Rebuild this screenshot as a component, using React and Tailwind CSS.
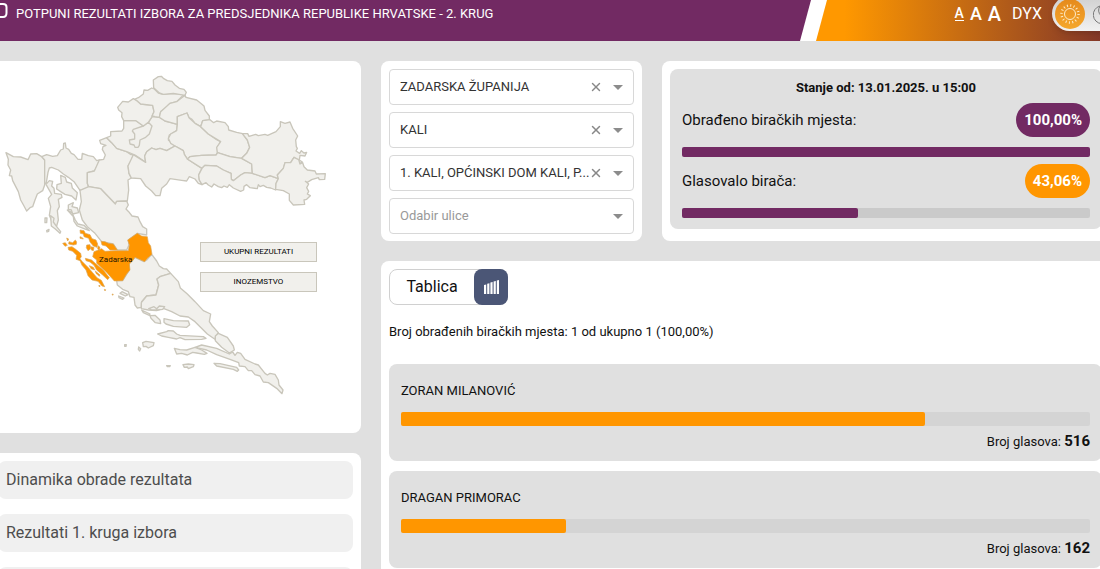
import React, { useState } from 'react';
import { X } from 'lucide-react';

const counties = [
  // Istra
  'M18,278 L40,290 L62,291 L84,299 L92,282 L110,281 L125,290 L134,300 L134,375 L128,392 L112,402 L105,420 L98,440 L90,443 L80,453 L72,438 L62,420 L55,395 L38,362 L35,348 L28,347 L32,330 L24,315 L25,298Z',
  // Primorsko-goranska
  'M125,290 L140,284 L158,289 L172,287 L182,270 L190,267 L191,250 L196,249 L198,264 L206,268 L214,280 L222,284 L234,298 L245,298 L247,280 L265,287 L280,290 L290,302 L298,300 L292,318 L283,333 L262,338 L262,370 L266,383 L240,391 L222,365 L205,352 L190,342 L175,330 L155,322 L148,324 L144,337 L139,368 L134,372 L134,300Z',
  // Karlovačka
  'M298,300 L311,298 L316,285 L307,268 L309,260 L318,256 L302,251 L299,241 L320,233 L335,248 L350,265 L380,275 L393,284 L400,283 L395,300 L384,318 L387,340 L394,354 L384,360 L386,390 L382,423 L350,424 L346,432 L325,410 L302,386 L266,380 L262,370 L262,338 L283,333Z',
  // Zagrebačka
  'M320,233 L332,228 L332,215 L366,213 L371,205 L371,182 L408,182 L430,198 L445,187 L456,170 L480,172 L495,183 L512,187 L532,193 L530,212 L508,225 L505,240 L525,258 L513,264 L500,272 L480,265 L468,269 L455,264 L440,275 L434,288 L437,307 L405,285 L380,275 L350,265 L335,248Z',
  // Grad Zagreb
  'M400,208 L430,198 L445,187 L456,198 L448,222 L437,232 L420,240 L418,256 L414,262 L405,262 L402,255 L390,252 L388,240 L404,237 L404,222 L397,213Z',
  // Krapinsko-zagorska
  'M353,142 L368,124 L385,126 L400,116 L412,123 L422,132 L458,136 L462,155 L455,172 L445,187 L430,198 L408,182 L371,182 L365,170 L366,158 L356,150Z',
  // Varaždinska
  'M405,117 L415,113 L430,102 L432,90 L443,91 L455,84 L463,87 L475,99 L490,103 L515,101 L555,102 L545,110 L530,125 L510,130 L498,144 L482,155 L478,172 L465,170 L456,168 L462,155 L458,136 L422,132Z',
  // Međimurska
  'M460,60 L475,50 L484,49 L490,55 L502,62 L516,64 L525,75 L538,85 L552,88 L559,97 L555,106 L520,100 L490,103 L478,99 L461,83Z',
  // Koprivničko-križevačka
  'M555,106 L558,112 L590,120 L604,131 L612,138 L615,151 L628,168 L628,180 L608,182 L602,200 L585,190 L576,178 L567,173 L561,159 L532,170 L532,193 L495,183 L478,172 L482,155 L510,130 L530,125Z',
  // Bjelovarsko-bilogorska
  'M532,170 L561,159 L567,173 L585,190 L602,200 L625,222 L650,239 L662,245 L652,262 L653,278 L648,285 L605,286 L570,290 L562,297 L553,283 L550,272 L525,258 L512,250 L505,235 L512,222 L530,212 L532,193Z',
  // Sisačko-moslavačka
  'M400,284 L437,307 L434,288 L440,275 L455,264 L468,269 L480,265 L500,272 L525,258 L550,272 L553,283 L562,297 L606,325 L596,345 L598,360 L606,374 L595,370 L585,357 L568,350 L560,363 L545,361 L510,356 L500,372 L485,385 L480,407 L467,407 L455,393 L437,378 L422,356 L394,354 L387,340 L384,318Z',
  // Virovitičko-podravska
  'M608,182 L630,179 L641,188 L650,183 L675,188 L685,200 L686,210 L710,217 L728,221 L742,240 L749,262 L740,280 L725,295 L690,290 L652,278 L650,262 L662,245 L625,222 L602,200Z',
  // Požeško-slavonska
  'M562,297 L570,290 L605,286 L648,285 L653,278 L690,290 L725,295 L755,312 L757,340 L735,338 L722,345 L700,362 L694,358 L693,340 L670,330 L650,318 L615,316 L606,325Z',
  // Brodsko-posavska
  'M606,325 L615,316 L650,318 L670,330 L693,340 L694,358 L700,362 L722,345 L735,338 L757,340 L795,353 L810,347 L835,356 L828,372 L827,390 L812,384 L800,382 L790,376 L780,380 L775,374 L772,386 L750,383 L740,374 L732,379 L731,390 L722,394 L700,384 L688,374 L682,382 L672,378 L665,383 L655,380 L642,372 L635,381 L625,375 L618,368 L606,374 L598,360 L596,345Z',
  // Osječko-baranjska
  'M727,221 L743,221 L747,229 L767,223 L775,227 L795,223 L803,226 L828,215 L841,200 L841,185 L855,190 L870,186 L878,205 L893,228 L887,240 L889,260 L892,265 L888,273 L899,280 L904,272 L912,279 L920,277 L915,288 L900,286 L898,300 L907,306 L900,310 L882,292 L872,308 L855,308 L850,325 L832,345 L835,356 L810,347 L795,353 L757,340 L755,312 L725,295 L740,280 L749,262 L742,240Z',
  // Vukovarsko-srijemska
  'M882,292 L896,299 L900,312 L908,308 L912,320 L922,330 L945,333 L949,342 L976,341 L974,358 L958,359 L955,353 L935,359 L922,367 L916,364 L926,372 L920,383 L926,394 L922,402 L931,407 L920,418 L912,420 L914,433 L880,435 L868,421 L868,402 L850,392 L827,388 L828,370 L835,356 L832,345 L850,325 L855,308 L872,308Z',
  // Ličko-senjska
  'M240,391 L266,380 L302,386 L325,410 L346,432 L350,424 L380,423 L385,435 L378,447 L386,455 L396,468 L414,471 L420,485 L428,500 L440,507 L440,525 L412,520 L385,540 L387,555 L380,570 L352,570 L340,552 L305,545 L285,520 L262,500 L247,480 L238,450 L244,425Z',
  // Šibensko-kninska
  'M440,600 L455,583 L470,603 L478,618 L490,626 L500,627 L512,640 L480,650 L471,657 L476,675 L468,705 L440,708 L425,725 L424,742 L412,744 L405,735 L402,712 L390,710 L385,695 L368,688 L352,675 L350,662 L368,662 L388,630 L388,610 L405,592 L432,605Z',
  // Splitsko-dalmatinska
  'M512,640 L535,665 L541,684 L562,702 L585,725 L610,752 L632,762 L628,785 L637,798 L655,818 L646,832 L648,840 L622,822 L585,785 L565,771 L540,768 L515,755 L490,745 L470,752 L445,750 L424,746 L424,728 L440,708 L468,705 L476,675 L471,657 L480,650Z',
  // Dubrovačko-neretvanska
  'M646,828 L655,820 L682,832 L700,858 L703,870 L688,879 L665,862 L646,842Z',
  'M585,862 L605,855 L650,865 L688,882 L698,876 L705,886 L712,877 L722,880 L735,898 L765,912 L775,915 L795,940 L802,945 L810,940 L825,943 L835,960 L837,975 L849,990 L846,1001 L830,985 L805,968 L790,966 L780,948 L765,944 L755,932 L745,932 L735,920 L718,918 L716,908 L690,898 L650,884 L620,870Z',
];

const islands = [
  'M138,373 L148,362 L158,364 L155,378 L162,385 L164,400 L184,403 L186,412 L175,418 L178,440 L172,452 L175,480 L168,505 L158,490 L148,466 L152,440 L145,415 L155,403Z',
  'M171,374 L184,370 L182,346 L196,352 L200,366 L214,370 L217,384 L232,398 L228,420 L215,408 L195,403 L182,395 L170,387Z',
  'M205,435 L220,428 L216,440 L232,444 L236,458 L218,462 L214,450 L205,448Z',
  'M202,450 L216,458 L226,480 L234,492 L252,496 L268,512 L252,506 L232,498 L222,484 L220,470Z',
  'M152,467 L162,475 L160,486 L170,500 L182,515 L180,520 L165,506 L154,498Z',
  'M135,474 L141,474 L140,488 L135,488Z',
  'M140,512 L147,508 L146,514 L141,516Z',
  'M360,700 L366,695 L384,704 L376,708Z',
  'M356,708 L372,714 L368,718 L357,713Z',
  'M425,750 L450,762 L448,766 L430,758Z',
  'M446,746 L462,740 L470,746 L478,738 L494,740 L488,748 L470,750 L456,750Z',
  'M450,767 L465,766 L480,780 L482,791 L466,788 L453,775Z',
  'M492,776 L520,782 L565,783 L569,794 L560,802 L520,799 L498,792 L492,787Z',
  'M473,822 L500,815 L505,812 L520,813 L530,822 L540,826 L610,830 L618,835 L605,838 L555,839 L540,833 L530,837 L505,832 L485,828Z',
  'M523,865 L540,869 L560,870 L585,862 L605,870 L621,880 L613,883 L590,879 L578,877 L562,885 L545,880 L530,882Z',
  'M642,910 L660,911 L710,922 L716,930 L712,934 L700,928 L650,918Z',
  'M549,914 L565,912 L582,914 L580,920 L565,926 L562,921 L553,922Z',
  'M428,848 L438,844 L462,848 L460,857 L445,864 L438,859 L430,860Z',
  'M416,861 L422,866 L419,873 L415,868Z',
  'M374,854 L379,854 L378,859 L374,859Z',
  'M500,917 L511,917 L509,920 L502,920Z',
];

const zadarska = [
  'M412,520 L425,528 L442,530 L445,548 L452,558 L456,583 L442,595 L434,605 L405,592 L398,602 L388,612 L390,630 L380,642 L368,662 L343,663 L318,635 L290,610 L290,600 L278,590 L282,575 L295,570 L305,566 L315,574 L345,572 L385,572 L388,555 L383,540Z',
  'M303,544 L315,545 L325,550 L340,552 L352,570 L330,570 L318,558 L306,555Z',
  'M240,510 L252,512 L256,520 L270,524 L276,536 L288,540 L293,552 L291,562 L280,558 L270,546 L266,535 L252,530 L250,522 L241,520Z',
  'M260,555 L270,554 L272,566 L264,572 L259,563Z',
  'M272,560 L282,562 L280,572 L274,570Z',
  'M294,557 L300,562 L298,572 L293,566Z',
  'M218,548 L226,540 L230,546 L229,553 L220,555 L206,552 L207,545Z',
  'M200,534 L206,537 L203,543Z',
  'M188,550 L196,548 L202,556 L195,559Z',
  'M240,530 L247,533 L250,537 L240,535Z',
  'M204,562 L216,560 L226,567 L242,580 L244,590 L240,596 L246,604 L266,624 L278,638 L292,654 L304,661 L314,680 L306,678 L294,664 L276,660 L264,647 L258,630 L246,616 L240,602 L228,598 L230,586 L218,574 L206,570Z',
  'M256,595 L275,600 L288,612 L310,630 L328,653 L323,659 L308,645 L290,630 L282,616 L270,606 L258,602Z',
  'M268,617 L280,622 L284,630 L273,626Z',
  'M286,633 L300,645 L298,649 L288,640Z',
  'M296,677 L300,676 L299,681Z',
  'M313,688 L317,689 L315,693Z',
  'M336,702 L340,703 L338,706Z',
];

const filters = [
  { id: 'zupanija', label: 'Županija', value: 'ZADARSKA ŽUPANIJA' },
  { id: 'grad', label: 'Grad ili općina', value: 'KALI' },
  { id: 'mjesto', label: 'Biračko mjesto', value: '1. KALI, OPĆINSKI DOM KALI, P...' },
  { id: 'ulica', label: 'Ulica', value: '', placeholder: 'Odabir ulice' },
];

const candidates = [
  { name: 'ZORAN MILANOVIĆ', votes: 516 },
  { name: 'DRAGAN PRIMORAC', votes: 162 },
];

const totalVotes = 678;

const links = ['Dinamika obrade rezultata', 'Rezultati 1. kruga izbora', 'Kandidati'];

const Header = () => (
  <header className="flex h-[41px] items-stretch overflow-hidden bg-[#722a63] text-white">
    <div className="flex h-7 flex-1 items-center gap-2">
      <svg className="h-7 w-2 shrink-0" viewBox="0 0 8 28" fill="none" stroke="currentColor" strokeWidth="2">
        <path d="M0 4h3q3.500 0 3.500 3v6q0 4-3.500 4H0" />
      </svg>
      <h1 className="text-[13px] whitespace-nowrap">
        POTPUNI REZULTATI IZBORA ZA PREDSJEDNIKA REPUBLIKE HRVATSKE - 2. KRUG
      </h1>
    </div>
    <div className="flex w-[300px] bg-white pl-4 [clip-path:polygon(11px_0,100%_0,100%_100%,0_100%)]">
      <div className="flex flex-1 justify-end bg-[linear-gradient(to_right,#ff9800_0%,#ff9800_10%,#843828_100%)] [clip-path:polygon(11px_0,100%_0,100%_100%,0_100%)]">
        <div className="flex h-7 items-center gap-[11px]">
          <div className="flex items-center gap-[6px] font-medium">
            <button aria-label="Mala slova" className="border-b text-sm leading-[13px]">A</button>
            <button aria-label="Srednja slova" className="text-lg leading-5">A</button>
            <button aria-label="Velika slova" className="text-xl leading-5">A</button>
          </div>
          <button className="text-base">DYX</button>
        </div>
        <button
          aria-label="Svijetla ili tamna tema"
          className="-mt-1 ml-2.5 -mr-4 flex h-[35px] w-16 items-center gap-2 rounded-full bg-gradient-to-b from-[#cfcfcf] to-[#f1f1f1] pl-[3px] shadow-md"
        >
          <span className="flex size-[30px] shrink-0 items-center justify-center rounded-full bg-gradient-to-b from-[#e58a1c] to-[#f5a72c]">
            <svg className="size-[22px]" viewBox="0 0 22 22" fill="none" stroke="#fdeccb" strokeWidth="1">
              <circle cx="11" cy="11" r="5.500" />
              <circle cx="11" cy="11" r="8.500" strokeWidth="2.500" strokeDasharray="1 2.340" />
            </svg>
          </span>
          <svg className="size-5 shrink-0" viewBox="0 0 20 20" fill="none" stroke="#777" strokeWidth="1">
            <path d="M7 2a9 9 0 1 0 11 11a8 8 0 0 1-11-11z" />
          </svg>
        </button>
      </div>
    </div>
  </header>
);

const CountyMap = () => (
  <section className="relative rounded-lg bg-white">
    <svg className="w-full" viewBox="-30 3 1113 1116" role="img" aria-label="Karta županija">
      <g fill="#f1f0ec" stroke="#c9c6bb" strokeWidth="4" strokeLinejoin="round">
        {counties.map((d) => (
          <path key={d} d={d} />
        ))}
        {islands.map((d) => (
          <path key={d} d={d} />
        ))}
      </g>
      <g fill="#ff9600" stroke="#d9a75c" strokeWidth="2" strokeLinejoin="round">
        {zadarska.map((d) => (
          <path key={d} d={d} />
        ))}
      </g>
      <text x="347" y="605" textAnchor="middle" fontSize="24" fill="#1a1200">
        Zadarska
      </text>
    </svg>
    <div className="absolute top-[181px] right-11 flex w-[117px] flex-col gap-[10px]">
      <button className="h-5 border border-[#c9c6bb] bg-[#f1f0ec] text-[8px] text-black">UKUPNI REZULTATI</button>
      <button className="h-5 border border-[#c9c6bb] bg-[#f1f0ec] text-[8px] text-black">INOZEMSTVO</button>
    </div>
  </section>
);

const Filter = ({ id, label, value, placeholder }) => {
  const [selected, setSelected] = useState(value);

  return (
    <div className="relative h-9 rounded border border-[#d8d8d8] bg-white">
      <select
        id={id}
        aria-label={label}
        value={selected}
        onChange={(e) => setSelected(e.target.value)}
        className={`h-full w-full appearance-none truncate bg-transparent pr-10 pl-2.5 text-[13px] ${selected ? 'text-[#333]' : 'text-[#999]'}`}
      >
        {value && <option>{value}</option>}
        <option value="">{placeholder}</option>
      </select>
      <div className="pointer-events-none absolute inset-y-0 right-2.5 flex items-center gap-2.5">
        {selected && (
          <button aria-label="Ukloni odabir" onClick={() => setSelected('')} className="pointer-events-auto text-[#888]">
            <X className="size-3.5" strokeWidth={2.5} />
          </button>
        )}
        <svg className="h-[5px] w-2.5" viewBox="0 0 10 5" fill="#8c8c8c">
          <path d="M0 0h10L5 5z" />
        </svg>
      </div>
    </div>
  );
};

const Status = () => (
  <section className="rounded-lg bg-white px-2 pt-2 pb-3">
    <div className="rounded-lg bg-[#e0e0e0] px-3 pt-2 pb-[11px]">
      <h2 className="h-[26px] text-center text-[13px] leading-[22px] font-bold">Stanje od: 13.01.2025. u 15:00</h2>
      <div className="flex items-center justify-between">
        <span className="text-[15px]">Obrađeno biračkih mjesta:</span>
        <span className="rounded-full bg-[#722a63] px-2 text-[15px] leading-[34px] font-bold text-white">100,00%</span>
      </div>
      <div role="progressbar" aria-label="Obrađeno" aria-valuenow={100} className="mt-2.5 h-2.5 rounded-xs bg-[#722a63]" />
      <div className="mt-[7px] flex items-center justify-between">
        <span className="text-[15px]">Glasovalo birača:</span>
        <span className="rounded-full bg-[#ff9600] px-2 text-[15px] leading-[34px] font-bold text-white">43,06%</span>
      </div>
      <div role="progressbar" aria-label="Glasovalo" aria-valuenow={43.06} className="mt-2.5 h-2.5 rounded-xs bg-[#cacaca]">
        <div className="h-full w-[43.06%] rounded-xs bg-[#722a63]" />
      </div>
    </div>
  </section>
);

const Candidate = ({ name, votes }) => (
  <li className="rounded-lg bg-[#e0e0e0] px-3 pt-4 pb-2">
    <h3 className="h-8 text-[13px] leading-[22px]">{name}</h3>
    <div className="h-3.5 rounded-xs bg-[#d4d4d4]">
      <div className="h-full rounded-xs bg-[#ff9600]" style={{ width: `${(votes / totalVotes) * 100}%` }} />
    </div>
    <p className="mt-1 text-right text-[13px] leading-[22px]">
      Broj glasova: <strong className="text-[15px]">{votes}</strong>
    </p>
  </li>
);

const Results = () => (
  <section className="flex-1 rounded-t-lg bg-white p-2">
    <div className="flex h-9 w-[119px] rounded-lg border border-[#d0d0d0]">
      <button className="flex-1 text-base">Tablica</button>
      <button aria-label="Grafikon" className="-my-px -mr-px flex w-[34px] items-center justify-center rounded-lg bg-[#4b5676]">
        <svg className="h-3.5 w-[15px]" viewBox="0 0 15 14" fill="#fff">
          <path d="M0 5l2.200-.5V14H0zM3.200 3.800l2.200-.5V14h-2.200zM6.400 2.600l2.200-.5V14h-2.200zM9.600 1.400l2.200-.5V14h-2.200zM12.800.5l2.200-.5v14h-2.200z" />
        </svg>
      </button>
    </div>
    <p className="mt-4 text-[13px] leading-[22px]">Broj obrađenih biračkih mjesta: 1 od ukupno 1 (100,00%)</p>
    <ul className="mt-[21px] flex flex-col gap-2.5">
      {candidates.map((c) => (
        <Candidate key={c.name} {...c} />
      ))}
    </ul>
  </section>
);

const App = () => (
  <div className="h-screen overflow-hidden bg-[#e0e0e0] font-['Roboto',sans-serif] text-[#111]">
    <Header />
    <main className="-mx-2.5 mt-5 flex gap-5">
      <div className="flex w-[371px] shrink-0 flex-col gap-5">
        <CountyMap />
        <nav className="flex flex-col gap-[15px] rounded-lg bg-white p-2">
          {links.map((text) => (
            <a key={text} href="#" className="rounded-lg bg-[#f0f0f0] px-2 text-base leading-[38px] text-[#4d4d4d]">
              {text}
            </a>
          ))}
        </nav>
      </div>
      <div className="flex min-w-0 flex-1 flex-col gap-5">
        <div className="grid grid-cols-[261px_1fr] gap-5">
          <form className="flex flex-col gap-[7px] rounded-lg bg-white px-2 pt-2 pb-[7px]">
            {filters.map((f) => (
              <Filter key={f.id} {...f} />
            ))}
          </form>
          <Status />
        </div>
        <Results />
      </div>
    </main>
  </div>
);

export default App;
